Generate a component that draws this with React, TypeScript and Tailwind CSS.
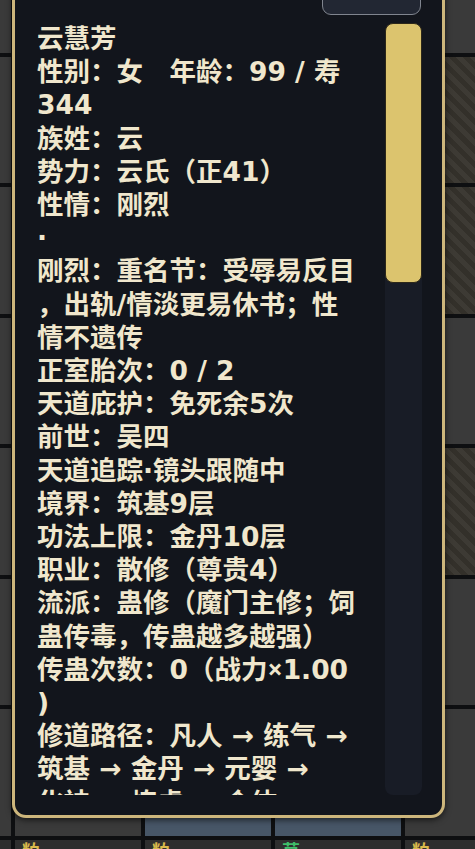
import React from "react";

const lines: string[] = [
  "云慧芳",
  "性别：女　年龄：99 / 寿",
  "344",
  "族姓：云",
  "势力：云氏（正41）",
  "性情：刚烈",
  "·",
  "刚烈：重名节：受辱易反目",
  "，出轨/情淡更易休书；性",
  "情不遗传",
  "正室胎次：0 / 2",
  "天道庇护：免死余5次",
  "前世：吴四",
  "天道追踪·镜头跟随中",
  "境界：筑基9层",
  "功法上限：金丹10层",
  "职业：散修（尊贵4）",
  "流派：蛊修（魔门主修；饲",
  "蛊传毒，传蛊越多越强）",
  "传蛊次数：0（战力×1.00",
  ")",
  "修道路径：凡人 → 练气 →",
  "筑基 → 金丹 → 元婴 →",
  "化神 → 炼虚 → 合体 →",
];

type Cell = { kind: "gray" | "stripe" | "blue" | "dark"; label?: string; labelColor?: string };

const G: Cell = { kind: "gray" };
const S: Cell = { kind: "stripe" };
const B: Cell = { kind: "blue" };

const rows: Cell[][] = [
  [G, G, G, G, G],
  [G, S, G, S, S],
  [G, G, S, G, S],
  [G, G, G, S, G],
  [G, S, G, G, S],
  [G, G, S, G, G],
  [G, G, B, B, G],
  [
    { kind: "dark", label: "粕", labelColor: "gold" },
    { kind: "dark", label: "粕", labelColor: "gold" },
    { kind: "dark", label: "粕", labelColor: "gold" },
    { kind: "dark", label: "草", labelColor: "green" },
    { kind: "dark", label: "粕", labelColor: "gold" },
  ],
];

function MapCell({ cell }: { cell: Cell }) {
  const base = "relative h-[126.5px] w-[126px]";
  let cls = "";
  if (cell.kind === "gray") cls = "bg-[#3a3a3a]";
  else if (cell.kind === "stripe")
    cls =
      "bg-[repeating-linear-gradient(45deg,#33302a_0px,#33302a_5px,#3d3a34_5px,#3d3a34_10px)]";
  else if (cell.kind === "blue") cls = "bg-[#475667]";
  else cls = "bg-[#2e2e2e]";
  return (
    <div className={`${base} ${cls}`}>
      {cell.label && (
        <span
          className={`absolute left-[7px] top-[1px] text-[18px] leading-none font-bold ${
            cell.labelColor === "green" ? "text-[#3fbf6a]" : "text-[#d9b94c]"
          }`}
          style={{ fontFamily: '"Noto Sans CJK SC", sans-serif' }}
        >
          {cell.label}
        </span>
      )}
    </div>
  );
}

function Line({ text }: { text: string }) {
  const parts = text.split("×");
  if (parts.length === 1) return <div className="whitespace-pre">{text}</div>;
  return (
    <div className="whitespace-pre">
      {parts[0]}
      <span style={{ fontFamily: '"Noto Sans", sans-serif' }}>×</span>
      {parts[1]}
    </div>
  );
}

export default function App() {
  return (
    <div className="relative h-[849px] w-[475px] overflow-hidden bg-[#0e0f11]">
      {/* map canvas */}
      <div className="absolute left-[-115px] top-[-74px] grid grid-cols-[repeat(5,126px)] gap-x-[4px] gap-y-[4px]">
        {rows.map((r, i) => r.map((c, j) => <MapCell key={`${i}-${j}`} cell={c} />))}
      </div>

      {/* overlay panel */}
      <div className="absolute left-[12px] top-[-40px] flex h-[858px] w-[433px] flex-col rounded-[14px] border-[3px] border-[#cdb67c] bg-[#12151c] pt-[12px] pb-[20px] shadow-[0_2px_6px_rgba(0,0,0,0.6)]">
        <div className="flex justify-end pr-[21px]">
          <div className="h-[40px] w-[99px] rounded-[9px] border-[1.5px] border-[#80858f] bg-[#222733]" />
        </div>
        <div className="mt-[8px] flex h-[772px] pl-[22px] pr-[20px]">
          <div
            className="h-full flex-1 overflow-hidden text-[26.5px] font-bold leading-[33.2px] text-[#f0e7cd]"
            style={{ fontFamily: '"DejaVu Sans", "Noto Sans CJK SC", sans-serif' }}
          >
            <div className="-mt-[1px]">
              {lines.map((l, i) => (
                <Line key={i} text={l} />
              ))}
            </div>
          </div>
          <div className="flex h-full w-[37px] flex-col rounded-[8px] bg-[#181c26]">
            <div className="h-[260px] w-full rounded-[8px] border border-[#2c2719] bg-[#dcc46e]" />
          </div>
        </div>
      </div>
    </div>
  );
}
